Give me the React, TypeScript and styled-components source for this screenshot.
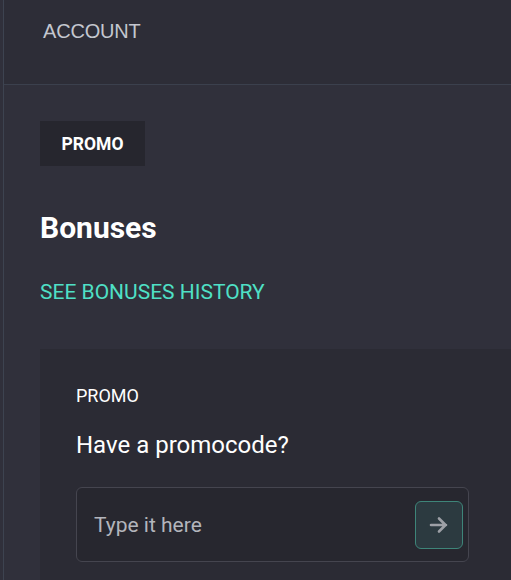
import React from "react";
import styled, { createGlobalStyle } from "styled-components";

const Global = createGlobalStyle`
  html, body { margin: 0; padding: 0; background: #30303b; }
  body { font-family: Roboto, "Liberation Sans", Arial, sans-serif; overflow: hidden; }
  * { box-sizing: border-box; }
`;

const Page = styled.div`
  margin-left: 3px;
  border-left: 1px solid #3d4350;
  min-height: 580px;
  background: #30303b;
`;

const Header = styled.header`
  height: 85px;
  background: #2d2d37;
  border-bottom: 1px solid #3b404d;
  padding: 19px 0 0 39px;
`;

const HeaderTitle = styled.div`
  font-family: "Liberation Sans", Arial, sans-serif;
  font-size: 20px;
  line-height: 24px;
  color: #c4c7cf;
  letter-spacing: -0.2px;
`;

const Content = styled.main`
  padding: 36px 0 0 36px;
  display: flex;
  flex-direction: column;
  align-items: flex-start;
`;

const Tag = styled.div`
  width: 105px;
  height: 45px;
  display: flex;
  align-items: center;
  justify-content: center;
  background: #26262e;
  color: #ffffff;
  font-weight: 700;
  font-size: 17.5px;
`;

const Title = styled.h1`
  margin: 44px 0 0;
  font-size: 30px;
  line-height: 36px;
  font-weight: 700;
  color: #ffffff;
`;

const HistoryLink = styled.a`
  margin-top: 34px;
  font-size: 21px;
  line-height: 24px;
  color: #4fe0c6;
  text-decoration: none;
  cursor: pointer;
`;

const Card = styled.section`
  margin-top: 45px;
  align-self: stretch;
  background: #2b2b34;
  padding: 36px 0 0 36px;
  min-height: 240px;
`;

const CardLabel = styled.div`
  font-size: 18px;
  line-height: 22px;
  color: #ffffff;
`;

const CardTitle = styled.h2`
  margin: 23px 0 0;
  font-size: 24px;
  line-height: 30px;
  font-weight: 400;
  color: #ffffff;
`;

const InputBox = styled.div`
  margin-top: 27px;
  width: 393px;
  height: 75px;
  border: 1px solid #45454f;
  border-radius: 6px;
  background: #27272f;
  display: flex;
  align-items: center;
  padding: 0 5px 0 17px;
`;

const Input = styled.input`
  flex: 1;
  min-width: 0;
  background: transparent;
  border: none;
  outline: none;
  padding: 0;
  font-family: Roboto, sans-serif;
  font-size: 21px;
  color: #ffffff;
  &::placeholder { color: #b3b5bc; }
`;

const SubmitButton = styled.button`
  width: 48px;
  height: 48px;
  border-radius: 6px;
  border: 1px solid #3e8579;
  background: #2c3a40;
  display: flex;
  align-items: center;
  justify-content: center;
  padding: 0;
  cursor: pointer;
`;

export default function App() {
  return (
    <>
      <Global />
      <Page>
        <Header>
          <HeaderTitle>ACCOUNT</HeaderTitle>
        </Header>
        <Content>
          <Tag>PROMO</Tag>
          <Title>Bonuses</Title>
          <HistoryLink>SEE BONUSES HISTORY</HistoryLink>
          <Card>
            <CardLabel>PROMO</CardLabel>
            <CardTitle>Have a promocode?</CardTitle>
            <InputBox>
              <Input placeholder="Type it here" />
              <SubmitButton aria-label="Apply">
                <svg width="20" height="18" viewBox="0 0 20 18" fill="none">
                  <path d="M2 9h15M10 2.5L16.5 9 10 15.5" stroke="#9da0a6" strokeWidth="2.6" strokeLinecap="round" strokeLinejoin="round" />
                </svg>
              </SubmitButton>
            </InputBox>
          </Card>
        </Content>
      </Page>
    </>
  );
}
